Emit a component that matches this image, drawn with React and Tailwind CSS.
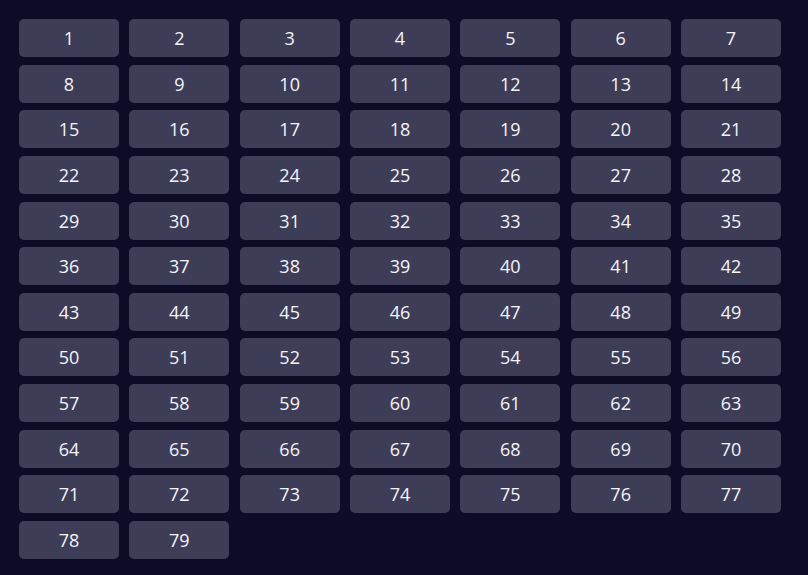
const nums = Array.from({ length: 79 }, (_, i) => i + 1);

export default function App() {
  return (
    <div className="min-h-[575px] w-[808px] bg-[#0d0c28] pt-[19px] pl-[19px]" style={{ fontFamily: '"Open Sans", Lato, sans-serif' }}>
      <div className="grid grid-cols-[repeat(7,100px)] gap-x-[10.33px] gap-y-[7.64px]">
        {nums.map(n => (
          <button
            key={n}
            className="h-[38px] rounded-[5px] bg-[#3e3d58] text-[18px] font-medium text-[#f4f4f8] flex items-center justify-center pt-px"
          >
            {n}
          </button>
        ))}
      </div>
    </div>
  );
}
